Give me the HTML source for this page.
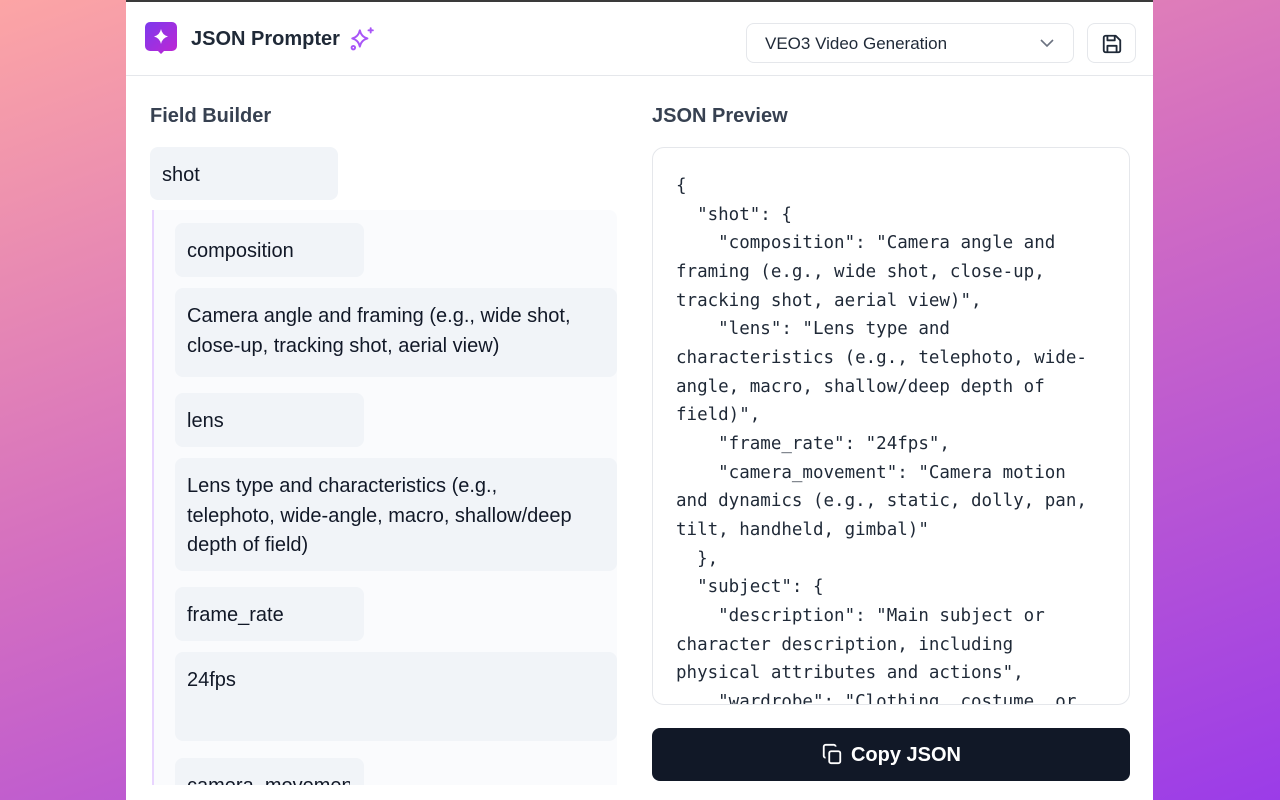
<!DOCTYPE html>
<html><head><meta charset="utf-8"><style>
*{box-sizing:border-box;margin:0;padding:0}
body{width:1280px;height:800px;overflow:hidden;position:relative;font-family:"Liberation Sans",sans-serif;color:#1f2937;
background:linear-gradient(160deg,#fca5a5 0%,#d46fc0 45%,#9b3ce8 100%);}
.panel{position:absolute;left:126px;top:0;width:1027px;height:800px;background:#fff;}
.topline{position:absolute;left:126px;top:0;width:1027px;height:2px;background:#3a3a3a}
.hdr{position:absolute;left:0;top:0;width:1027px;height:76px;border-bottom:1px solid #e5e7eb}
.a{position:absolute}
.lbl{position:absolute;background:#f1f4f8;border-radius:8px;font-size:20px;color:#111827;padding-left:12px;line-height:29.5px;overflow:hidden;white-space:nowrap}
.mono{font-family:"DejaVu Sans Mono","Liberation Mono",monospace;font-size:17.5px;line-height:28.65px;white-space:pre;color:#1f2937}
</style></head><body>
<div class="panel">
<div class="hdr">
 <svg class="a" style="left:18px;top:21px" width="35" height="36" viewBox="0 0 35 36">
  <defs><linearGradient id="g" x1="0" y1="0" x2="1" y2="1"><stop offset="0" stop-color="#7c3aed"/><stop offset="1" stop-color="#c026d3"/></linearGradient></defs>
  <path d="M6 1h22a5 5 0 0 1 5 5v19a5 5 0 0 1-5 5h-8l-3 3-3-3H6a5 5 0 0 1-5-5V6a5 5 0 0 1 5-5z" fill="url(#g)"/>
  <path d="M17 8q1.2 6 7 7.5q-5.8 1.5-7 7.5q-1.2-6-7-7.5q5.8-1.5 7-7.5z" fill="#fff"/>
 </svg>
 <div class="a" style="left:65px;top:28px;font-size:20px;font-weight:bold;color:#1f2937">JSON Prompter</div>
 <svg class="a" style="left:223px;top:26px" width="26" height="26" viewBox="0 0 24 24" fill="none" stroke="#a855f7" stroke-width="1.8" stroke-linejoin="round" stroke-linecap="round">
  <path d="M10 4q1.3 6 7 7.5q-5.7 1.5-7 7.5q-1.3-6-7-7.5q5.7-1.5 7-7.5z"/><path d="M20 2v4M18 4h4"/><circle cx="4" cy="20" r="1.6"/>
 </svg>
 <div class="a" style="left:620px;top:23px;width:328px;height:40px;border:1px solid #e5e7eb;border-radius:8px;font-size:17px;color:#1f2937;padding:10px 0 0 18px">VEO3 Video Generation
  <svg class="a" style="right:18px;top:14px" width="16" height="10" viewBox="0 0 16 10" fill="none" stroke="#6b7280" stroke-width="1.6"><path d="M2 2l6 6 6-6"/></svg></div>
 <div class="a" style="left:961px;top:23px;width:49px;height:40px;border:1px solid #e5e7eb;border-radius:8px">
  <svg class="a" style="left:13px;top:9px" width="22" height="22" viewBox="0 0 24 24" fill="none" stroke="#1f2937" stroke-width="2" stroke-linejoin="round"><path d="M5 3h11l5 5v11a2 2 0 0 1-2 2H5a2 2 0 0 1-2-2V5a2 2 0 0 1 2-2z"/><path d="M7 3v5h8V3"/><path d="M7 21v-7h10v7"/></svg></div>
</div>
<div class="a" style="left:24px;top:105px;font-size:20px;font-weight:bold;color:#374151">Field Builder</div>
<div class="a" style="left:526px;top:105px;font-size:20px;font-weight:bold;color:#374151">JSON Preview</div>
<div class="lbl" style="left:24px;top:147px;width:188px;height:53px;padding-top:14px">shot</div>
<div class="a" style="left:26px;top:210px;width:465px;height:575px;background:#fafbfd;border-left:2px solid #e9d5ff;border-radius:0 8px 0 0"></div>
<div class="lbl" style="left:49px;top:223px;width:189px;height:54px;padding-top:14px">composition</div>
<div class="lbl" style="left:49px;top:288px;width:442px;height:89px;padding-top:14px">Camera angle and framing (e.g., wide shot,<br>close-up, tracking shot, aerial view)</div>
<div class="lbl" style="left:49px;top:393px;width:189px;height:54px;padding-top:14px">lens</div>
<div class="lbl" style="left:49px;top:458px;width:442px;height:113px;padding-top:14px">Lens type and characteristics (e.g.,<br>telephoto, wide-angle, macro, shallow/deep<br>depth of field)</div>
<div class="lbl" style="left:49px;top:587px;width:189px;height:54px;padding-top:14px">frame_rate</div>
<div class="lbl" style="left:49px;top:652px;width:442px;height:89px;padding-top:14px">24fps</div>
<div class="a" style="left:49px;top:758px;width:189px;height:27px;overflow:hidden"><div class="lbl" style="left:0;top:0;width:189px;height:54px;padding-top:14px"><div style="width:163px;overflow:hidden">camera_movement</div></div></div>
<div class="a" style="left:526px;top:147px;width:478px;height:558px;border:1px solid #e5e7eb;border-radius:12px;overflow:hidden">
<div class="mono a" style="left:23px;top:24px">{
  "shot": {
    "composition": "Camera angle and
framing (e.g., wide shot, close-up,
tracking shot, aerial view)",
    "lens": "Lens type and
characteristics (e.g., telephoto, wide-
angle, macro, shallow/deep depth of
field)",
    "frame_rate": "24fps",
    "camera_movement": "Camera motion
and dynamics (e.g., static, dolly, pan,
tilt, handheld, gimbal)"
  },
  "subject": {
    "description": "Main subject or
character description, including
physical attributes and actions",
    "wardrobe": "Clothing, costume, or</div></div>
<div class="a" style="left:526px;top:728px;width:478px;height:53px;background:#111827;border-radius:8px;color:#fff;font-size:20px;font-weight:bold;text-align:center;line-height:55px">
 <svg style="vertical-align:-4px;margin-right:8px" width="22" height="22" viewBox="0 0 24 24" fill="none" stroke="#fff" stroke-width="2" stroke-linejoin="round"><rect x="9" y="9" width="12" height="13" rx="2"/><path d="M5 16a2 2 0 0 1-2-2V4a2 2 0 0 1 2-2h9a2 2 0 0 1 2 2"/></svg>Copy JSON</div>
</div>
<div class="topline"></div>
</body></html>
